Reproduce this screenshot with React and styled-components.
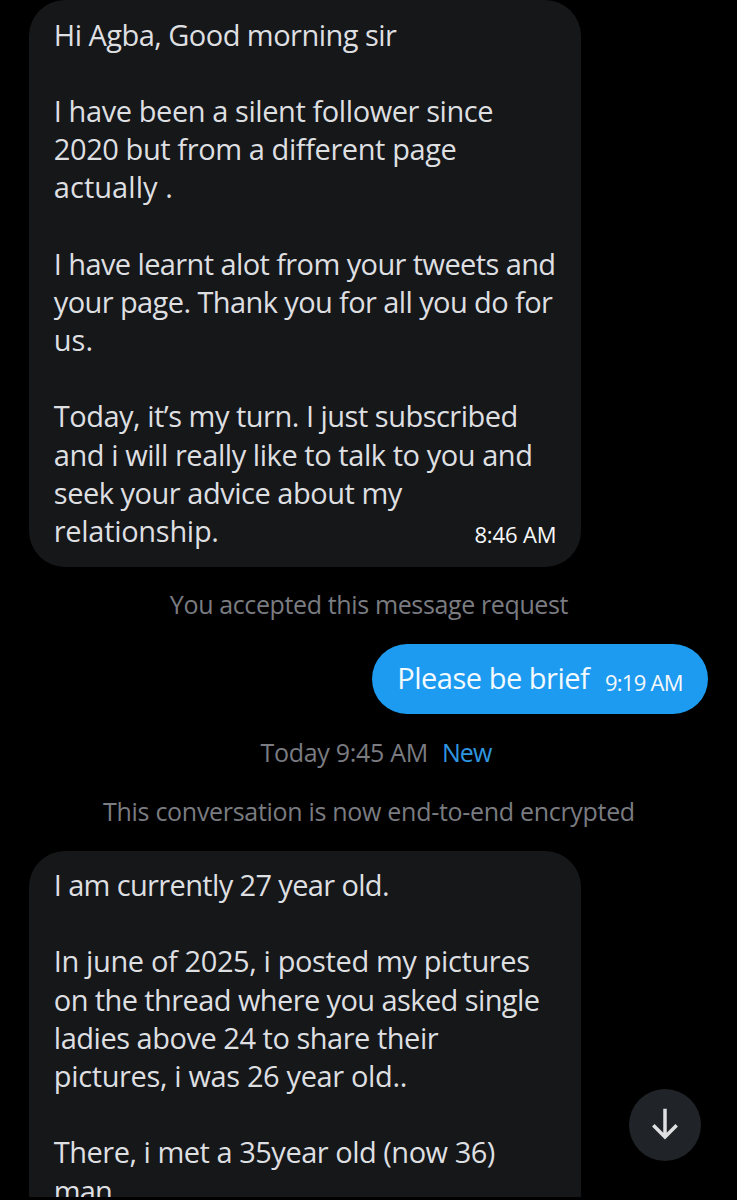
import React from 'react';
import styled, { createGlobalStyle } from 'styled-components';

const GlobalStyle = createGlobalStyle`
  * { box-sizing: border-box; }
  html, body { margin: 0; background: #000; overflow: hidden; }
`;

const Screen = styled.main`
  position: relative;
  width: 737px;
  height: 1200px;
  background: #000;
  font-family: 'Open Sans', 'Noto Sans', sans-serif;
  padding-bottom: 3.4px;
`;

const Thread = styled.div`
  display: flex;
  flex-direction: column;
  height: 100%;
  overflow: hidden;
`;

const Incoming = styled.article`
  flex: none;
  align-self: flex-start;
  width: 552.5px;
  height: ${(p) => p.$height}px;
  margin-top: ${(p) => p.$top || 0}px;
  margin-left: 28.8px;
  padding: 15.5px 25px 0;
  border-radius: 36px;
  background: #161719;
  color: #dedfe1;
`;

const Line = styled.p`
  margin: 0;
  height: 38.2px;
  font-size: 29px;
  line-height: 38.2px;
  white-space: pre;
  letter-spacing: ${(p) => p.$spacing}px;
`;

const LastRow = styled.div`
  display: flex;
  justify-content: space-between;
  align-items: flex-start;
`;

const Time = styled.time`
  font-size: 22px;
  line-height: 30px;
  margin-top: 7.3px;
  color: #f7f8f9;
  white-space: nowrap;
  letter-spacing: ${(p) => p.$spacing}px;
`;

const Outgoing = styled.article`
  flex: none;
  align-self: flex-end;
  display: flex;
  justify-content: space-between;
  width: 336px;
  height: 70px;
  margin: ${(p) => p.$top}px 28.8px 0 0;
  padding: 15.4px 25.5px 0 25px;
  border-radius: 35px;
  background: #1d9bf0;
  color: #f3faff;
`;

const Notice = styled.div`
  flex: none;
  display: flex;
  justify-content: center;
  gap: 14px;
  height: 34px;
  margin-top: ${(p) => p.$top}px;
  padding-left: ${(p) => p.$shift || 0}px;
  font-size: 25px;
  line-height: 34px;
  color: #7a7c81;
  white-space: nowrap;
  letter-spacing: ${(p) => p.$spacing}px;
`;

const NewLabel = styled.span`
  color: #2f96e0;
  letter-spacing: -0.9px;
`;

const ScrollButton = styled.button`
  position: absolute;
  right: 36px;
  bottom: 39.5px;
  width: 72px;
  height: 72px;
  padding: 0;
  border: 0;
  border-radius: 50%;
  background: #202327;
  display: grid;
  place-items: center;
`;

const firstMessage = [
  ['Hi Agba, Good morning sir', -0.53],
  ['', 0],
  ['I have been a silent follower since', -0.42],
  ['2020 but from a different page', -0.41],
  ['actually .', 0.05],
  ['', 0],
  ['I have learnt alot from your tweets and', -0.6],
  ['your page. Thank you for all you do for', -0.6],
  ['us.', 0],
  ['', 0],
  ['Today, it’s my turn. I just subscribed', -0.5],
  ['and i will really like to talk to you and', -0.44],
  ['seek your advice about my', -0.48],
];

const secondMessage = [
  ['I am currently 27 year old.', -0.64],
  ['', 0],
  ['In june of 2025, i posted my pictures', -0.38],
  ['on the thread where you asked single', -0.59],
  ['ladies above 24 to share their', -0.48],
  ['pictures, i was 26 year old..', -0.36],
  ['', 0],
  ['There, i met a 35year old (now 36)', -0.49],
  ['man', -0.9],
];

const renderLines = (lines) =>
  lines.map(([text, spacing], i) => (
    <Line key={i} $spacing={spacing}>{text}</Line>
  ));

export default function App() {
  return (
    <Screen>
      <GlobalStyle />
      <Thread>
        <Incoming $height={566.6}>
          {renderLines(firstMessage)}
          <LastRow>
            <Line $spacing={-0.3}>relationship.</Line>
            <Time $spacing={-0.15}>8:46 AM</Time>
          </LastRow>
        </Incoming>
        <Notice $top={20.8} $shift={1} $spacing={-0.37}>You accepted this message request</Notice>
        <Outgoing $top={22.6}>
          <Line $spacing={-0.48}>Please be brief</Line>
          <Time $spacing={-0.75}>9:19 AM</Time>
        </Outgoing>
        <Notice $top={21} $shift={15} $spacing={-0.3}>
          <span>Today 9:45 AM</span>
          <NewLabel>New</NewLabel>
        </Notice>
        <Notice $top={25} $shift={1} $spacing={-0.3}>This conversation is now end-to-end encrypted</Notice>
        <Incoming $top={22.6} $height={600}>
          {renderLines(secondMessage)}
        </Incoming>
      </Thread>
      <ScrollButton aria-label="Scroll to latest">
        <svg width="36" height="36" viewBox="0 0 36 36" fill="none" stroke="#dfe0e1" strokeWidth="3.5">
          <path d="M18 1.8V30M6.3 18.3L18 30L29.7 18.3" />
        </svg>
      </ScrollButton>
    </Screen>
  );
}
